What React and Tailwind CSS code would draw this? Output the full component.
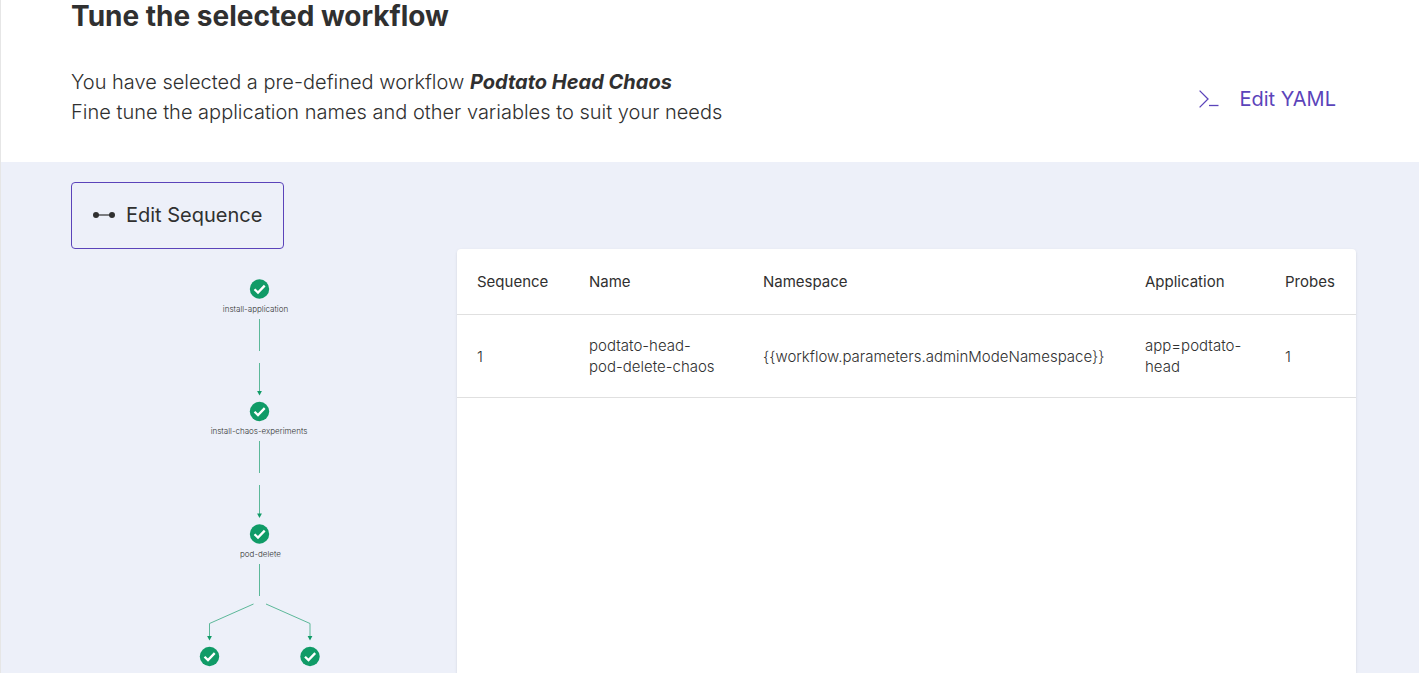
import React from 'react';

const experiments = [
  {
    sequence: 1,
    name: 'podtato-head-pod-delete-chaos',
    namespace: '{{workflow.parameters.adminModeNamespace}}',
    application: 'app=podtato-head',
    probes: 1,
  },
];

function TerminalIcon() {
  return (
    <svg width="20" height="18" viewBox="0 0 20 18" fill="none" stroke="currentColor" strokeWidth="1.3" aria-hidden="true">
      <path d="M0.6 0.6 L9 9 L0.6 17.4" />
      <path d="M10 15.5 H19.5" />
    </svg>
  );
}

function SequenceIcon() {
  return (
    <svg width="22" height="7" viewBox="0 0 22 7" fill="currentColor" aria-hidden="true">
      <path d="M3 3 H19" stroke="currentColor" strokeWidth="1.2" />
      <circle cx="3" cy="3" r="3" />
      <circle cx="19" cy="3" r="3" />
    </svg>
  );
}

function GraphNode({ x, y, label, labelX }) {
  return (
    <g>
      <circle cx={x} cy={y} r="9.7" fill="#109b67" />
      <path
        d={`M${x - 5} ${y + 0.2} L${x - 1.5} ${y + 3.6} L${x + 5.2} ${y - 3.4}`}
        fill="none"
        stroke="#fff"
        strokeWidth="2.3"
      />
      {label && (
        <text x={labelX} y={Math.floor(y) + 23} textAnchor="middle" fontSize="8" fontWeight="300" fill="#303030">
          {label}
        </text>
      )}
    </g>
  );
}

function Arrow({ x, y }) {
  return <path d={`M${x - 2.4} ${y - 4} H${x + 2.4} L${x} ${y + 0.5} Z`} fill="#109b67" />;
}

function WorkflowGraph() {
  return (
    <svg width="140" height="400" viewBox="0 0 140 400" role="img" aria-label="Workflow graph">
      <g fill="none" stroke="#109b67" strokeWidth="1" opacity="0.65">
        <path d="M70.5 46 V78 M70.5 90 V120" />
        <path d="M70.5 168 V200 M70.5 212 V242" />
        <path d="M70.5 291 V323" />
        <path d="M64.5 331 L20.5 350.5 V364" />
        <path d="M77 331 L121 350.5 V364" />
      </g>
      <Arrow x={70.5} y={122} />
      <Arrow x={70.5} y={244.5} />
      <Arrow x={20.5} y={367} />
      <Arrow x={121} y={367} />
      <GraphNode x={70.5} y={16} label="install-application" labelX={66.5} />
      <GraphNode x={70.5} y={138.5} label="install-chaos-experiments" labelX={70} />
      <GraphNode x={70.5} y={261} label="pod-delete" labelX={71.5} />
      <GraphNode x={20.5} y={383.5} />
      <GraphNode x={121} y={383.5} />
    </svg>
  );
}

function ExperimentTable() {
  return (
    <table className="w-full table-fixed border-collapse text-left text-[15px] leading-[21px]">
      <colgroup>
        <col className="w-[112px]" />
        <col className="w-[174px]" />
        <col />
        <col className="w-[140px]" />
        <col className="w-[91px]" />
      </colgroup>
      <thead>
        <tr className="border-b border-[#e0e0e0]">
          <th className="px-5 py-[22px] font-normal">Sequence</th>
          <th className="px-5 py-[22px] font-normal">Name</th>
          <th className="px-5 py-[22px] font-normal">Namespace</th>
          <th className="px-5 py-[22px] font-normal">Application</th>
          <th className="px-5 py-[22px] font-normal">Probes</th>
        </tr>
      </thead>
      <tbody>
        {experiments.map((exp) => (
          <tr key={exp.sequence} className="border-b border-[#e0e0e0] font-light">
            <td className="px-5 py-5">{exp.sequence}</td>
            <td className="px-5 py-5">{exp.name}</td>
            <td className="px-5 py-5">{exp.namespace}</td>
            <td className="px-5 py-5">{exp.application}</td>
            <td className="px-5 py-5">{exp.probes}</td>
          </tr>
        ))}
      </tbody>
    </table>
  );
}

export default function App() {
  return (
    <div className="flex min-h-screen flex-col border-l border-[#e6e6e6] bg-white font-['Inter',sans-serif] text-[#303030]">
      <header className="pr-[83px] pb-[35px] pl-[70px]">
        <h1 className="text-[28px] leading-8 font-bold">Tune the selected workflow</h1>
        <div className="mt-[35px] flex items-center justify-between">
          <p className="text-xl leading-[30px] font-light">
            You have selected a pre-defined workflow <i className="font-bold">Podtato Head Chaos</i>
            <br />
            Fine tune the application names and other variables to suit your needs
          </p>
          <button type="button" className="flex items-center gap-5 pt-1 text-xl text-[#5b44ba]">
            <TerminalIcon />
            Edit YAML
          </button>
        </div>
      </header>

      <main className="flex grow flex-col bg-[#edf0f9] pt-5 pr-[63px] pl-[70px]">
        <div>
          <button
            type="button"
            className="flex items-center gap-[11px] rounded border border-[#5b44ba] px-[21px] py-[18px] text-xl leading-[29px]"
          >
            <SequenceIcon />
            Edit Sequence
          </button>
        </div>
        <div className="flex grow gap-2.5">
          <div className="flex w-[376px] shrink-0 justify-center pt-6">
            <WorkflowGraph />
          </div>
          <section className="grow rounded-t bg-white shadow-sm">
            <ExperimentTable />
          </section>
        </div>
      </main>
    </div>
  );
}
